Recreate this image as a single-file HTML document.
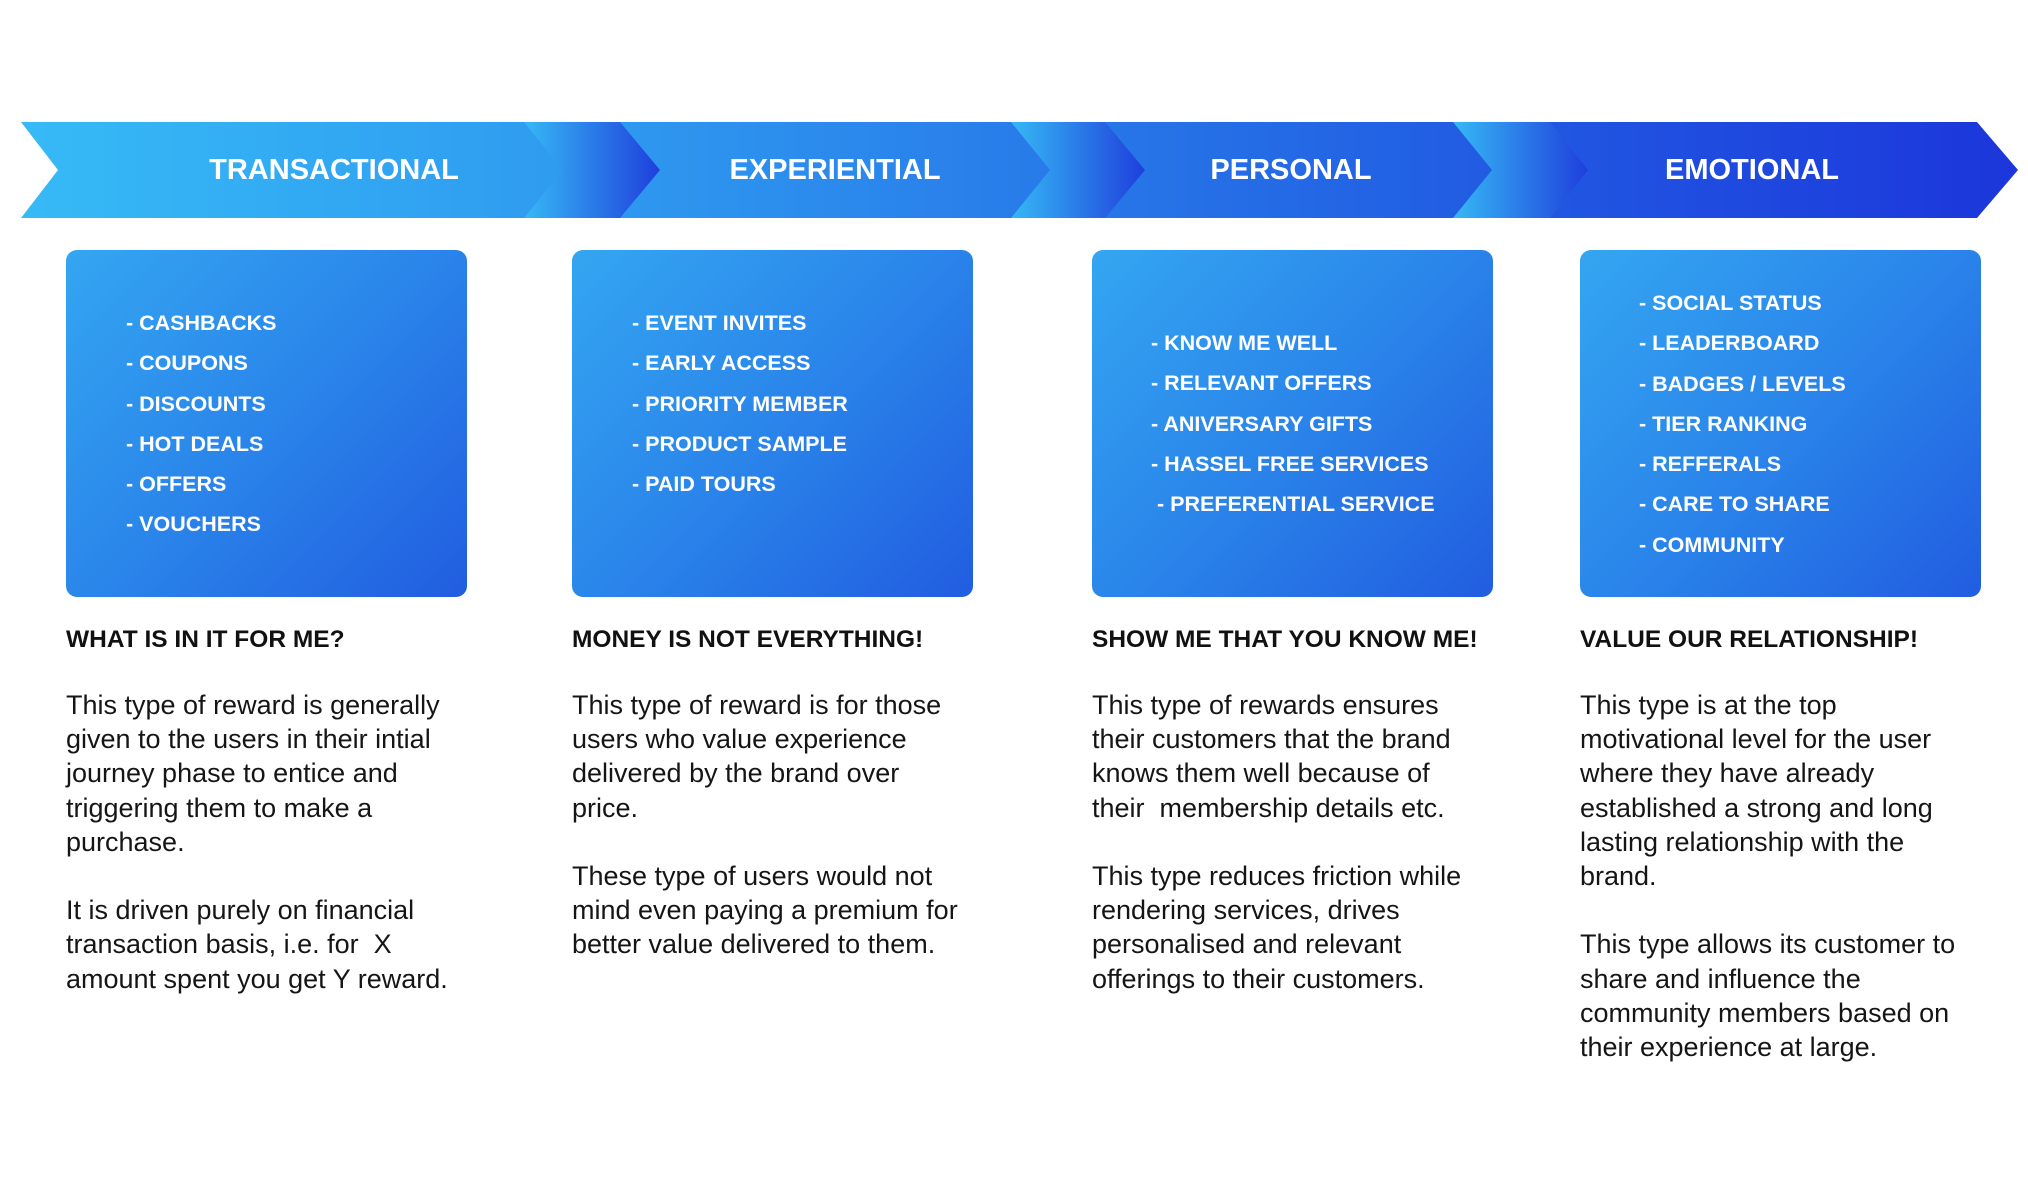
<!DOCTYPE html>
<html><head><meta charset="utf-8"><style>
body{margin:0;width:2028px;height:1190px;background:#fff;position:relative;overflow:hidden;font-family:"Liberation Sans",sans-serif}
.lab{position:absolute;top:170px;height:0;line-height:0;color:#fff;font-weight:bold;font-size:29px;transform:translateX(-50%);white-space:nowrap}
.box{position:absolute;top:250px;width:401px;height:347px;border-radius:11px;background:linear-gradient(135deg,#34a6f1 0%,#2a85ea 50%,#215de0 100%)}
.list{position:absolute;color:#fff;font-weight:bold;font-size:21.5px;line-height:40.3px;white-space:pre}
.h{position:absolute;top:626px;font-weight:bold;font-size:24.5px;color:#111;white-space:nowrap}
.p{position:absolute;top:688px;font-size:27px;line-height:34.2px;color:#151515;white-space:pre}
</style></head><body>
<svg width="2028" height="240" style="position:absolute;left:0;top:0">
<defs>
<linearGradient id="band" x1="0" x2="1" y1="0" y2="0">
<stop offset="0" stop-color="#36baf6"/><stop offset="0.35" stop-color="#2d92ee"/><stop offset="0.7" stop-color="#2260e3"/><stop offset="1" stop-color="#1c36db"/></linearGradient>
<linearGradient id="dv" x1="0" x2="1" y1="0" y2="0">
<stop offset="0" stop-color="#36b8f5"/><stop offset="1" stop-color="#1f3fdc"/></linearGradient>
</defs>
<polygon points="21,122 1977,122 2018,170 1977,218 21,218 58,170" fill="url(#band)"/>
<polygon points="524,122 620,122 660,170 620,218 524,218 563,170" fill="url(#dv)"/>
<polygon points="1011,122 1105,122 1145,170 1105,218 1011,218 1050,170" fill="url(#dv)"/>
<polygon points="1453,122 1550,122 1588,170 1550,218 1453,218 1492,170" fill="url(#dv)"/>
</svg>
<div class="lab" style="left:334px">TRANSACTIONAL</div>
<div class="lab" style="left:835px">EXPERIENTIAL</div>
<div class="lab" style="left:1291px">PERSONAL</div>
<div class="lab" style="left:1752px">EMOTIONAL</div>

<div class="box" style="left:66px"></div>
<div class="box" style="left:572px"></div>
<div class="box" style="left:1092px"></div>
<div class="box" style="left:1580px"></div>

<div class="list" style="left:126px;top:303px">- CASHBACKS
- COUPONS
- DISCOUNTS
- HOT DEALS
- OFFERS
- VOUCHERS</div>
<div class="list" style="left:632px;top:303px">- EVENT INVITES
- EARLY ACCESS
- PRIORITY MEMBER
- PRODUCT SAMPLE
- PAID TOURS</div>
<div class="list" style="left:1151px;top:323px">- KNOW ME WELL
- RELEVANT OFFERS
- ANIVERSARY GIFTS
- HASSEL FREE SERVICES
 - PREFERENTIAL SERVICE</div>
<div class="list" style="left:1639px;top:283px">- SOCIAL STATUS
- LEADERBOARD
- BADGES / LEVELS
- TIER RANKING
- REFFERALS
- CARE TO SHARE
- COMMUNITY</div>

<div class="h" style="left:66px">WHAT IS IN IT FOR ME?</div>
<div class="h" style="left:572px">MONEY IS NOT EVERYTHING!</div>
<div class="h" style="left:1092px">SHOW ME THAT YOU KNOW ME!</div>
<div class="h" style="left:1580px">VALUE OUR RELATIONSHIP!</div>

<div class="p" style="left:66px">This type of reward is generally
given to the users in their intial
journey phase to entice and
triggering them to make a
purchase.

It is driven purely on financial
transaction basis, i.e. for  X
amount spent you get Y reward.</div>
<div class="p" style="left:572px">This type of reward is for those
users who value experience
delivered by the brand over
price.

These type of users would not
mind even paying a premium for
better value delivered to them.</div>
<div class="p" style="left:1092px">This type of rewards ensures
their customers that the brand
knows them well because of
their  membership details etc.

This type reduces friction while
rendering services, drives
personalised and relevant
offerings to their customers.</div>
<div class="p" style="left:1580px">This type is at the top
motivational level for the user
where they have already
established a strong and long
lasting relationship with the
brand.

This type allows its customer to
share and influence the
community members based on
their experience at large.</div>
</body></html>
